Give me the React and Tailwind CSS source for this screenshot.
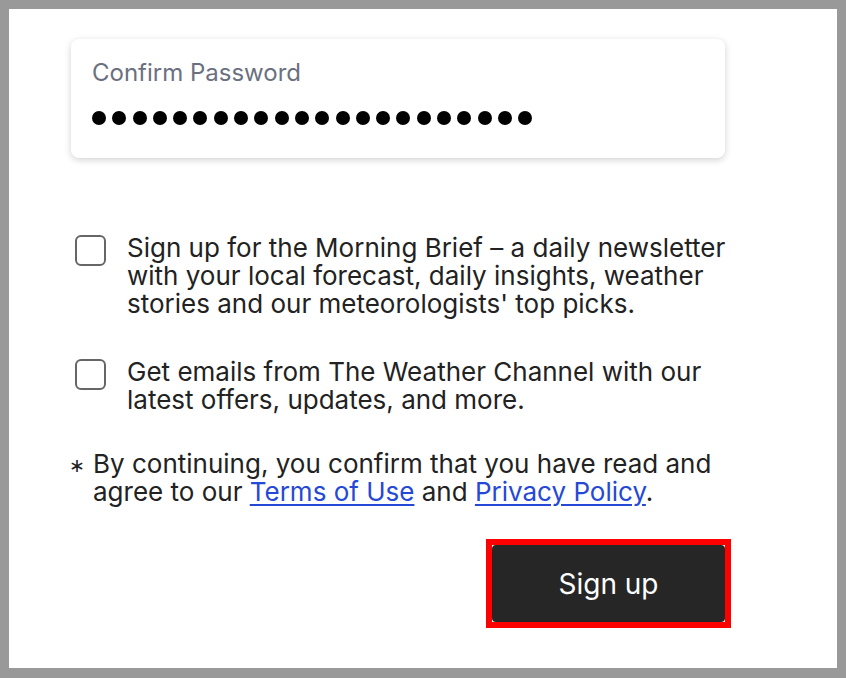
export default function App() {
  const dots = Array.from({ length: 22 });
  return (
    <div className="w-[846px] h-[678px] bg-[#999999] pt-[9px] px-[9px] pb-[10px]" style={{ fontFamily: 'Inter, "Noto Sans", sans-serif' }}>
      <div className="w-full h-full bg-white pl-[62px] pr-[20px] pt-[30px] flex flex-col">
        <div className="shrink-0 w-[654px] h-[119px] rounded-[8px] bg-white shadow-[0_2px_7px_rgba(0,0,0,0.18)] px-[21px] pt-[20px]">
          <div className="text-[24px] leading-[28px] text-[#6b7080]">Confirm Password</div>
          <div className="flex gap-[6.3px] mt-[24px]">
            {dots.map((_, i) => (
              <span key={i} className="w-[14px] h-[14px] rounded-full bg-black" />
            ))}
          </div>
        </div>

        <label className="flex items-start gap-[21px] mt-[76px] pl-[4px]">
          <span className="mt-[1px] w-[31px] h-[31px] shrink-0 rounded-[6px] border-2 border-[#666666] bg-white" />
          <span className="w-[605px] text-[26px] leading-[28px] text-[#222222]">
            Sign up for the Morning Brief – a daily newsletter with your local forecast, daily insights, weather stories and our meteorologists' top picks.
          </span>
        </label>

        <label className="flex items-start gap-[21px] mt-[40px] pl-[4px]">
          <span className="mt-[1px] w-[31px] h-[31px] shrink-0 rounded-[6px] border-2 border-[#666666] bg-white" />
          <span className="w-[605px] text-[26px] leading-[28px] text-[#222222]">
            Get emails from The Weather Channel with our latest offers, updates, and more.
          </span>
        </label>

        <div className="flex items-start mt-[36px] text-[26px] leading-[28px] text-[#222222]">
          <span className="w-[22px] shrink-0 text-[19px] pt-[2px] -ml-[2px] mr-[2px]">∗</span>
          <span className="w-[628px]">
            By continuing, you confirm that you have read and agree to our{' '}
            <a href="#" className="text-[#2548d6] underline underline-offset-[3px]">Terms of Use</a> and{' '}
            <a href="#" className="text-[#2548d6] underline underline-offset-[3px]">Privacy Policy</a>.
          </span>
        </div>

        <div className="w-[660px] flex justify-end mt-[33px]">
          <div className="border-[6px] border-[#ff0000]">
            <button className="w-[233px] h-[77px] rounded-[4px] bg-[#262626] text-white text-[28px]">Sign up</button>
          </div>
        </div>
      </div>
    </div>
  );
}
